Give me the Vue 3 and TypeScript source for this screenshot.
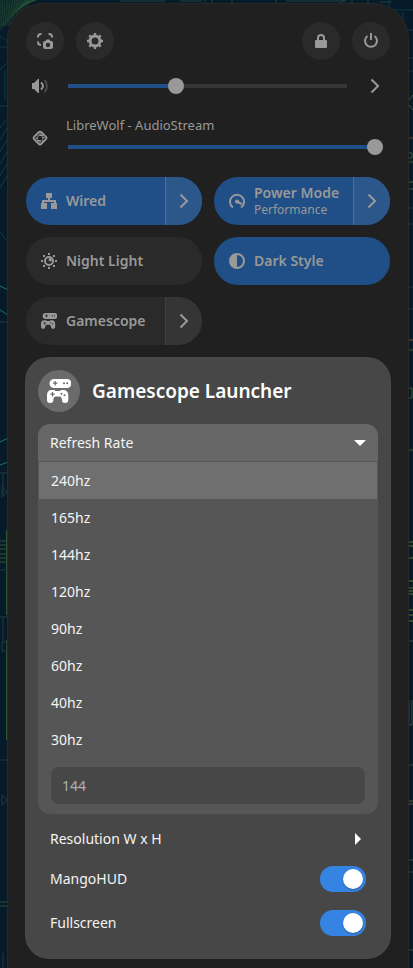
<script setup lang="ts">
import { ref } from 'vue'

interface Tile {
  id: string
  title: string
  subtitle?: string
  icon: string
  active: boolean
  menu: boolean
}

const volume = ref(38)
const streamVolume = ref(100)
const refreshOpen = ref(true)
const selected = ref('240hz')
const mangoHud = ref(true)
const fullscreen = ref(true)

const rates: string[] = ['240hz', '165hz', '144hz', '120hz', '90hz', '60hz', '40hz', '30hz']

const tiles = ref<Tile[]>([
  { id: 'wired', title: 'Wired', icon: 'i-wired', active: true, menu: true },
  { id: 'power-mode', title: 'Power Mode', subtitle: 'Performance', icon: 'i-gauge', active: true, menu: true },
  { id: 'night', title: 'Night Light', icon: 'i-night', active: false, menu: false },
  { id: 'dark', title: 'Dark Style', icon: 'i-dark', active: true, menu: false },
  { id: 'gamescope', title: 'Gamescope', icon: 'i-pads', active: false, menu: true },
])

const leftHatch: number[] = Array.from({ length: 13 }, (_, i) => i * 5)
</script>

<template>
  <div class="desktop">
    <svg class="wallpaper" aria-hidden="true">
      <g fill="none" stroke-width="1">
        <path v-for="n in leftHatch" :key="n" :d="`M0 ${n / 2} L${60 - n / 2} -4 M${n / 2} 0 L${n / 3} 26`" stroke="#2c5a36" opacity=".45" />
        <path d="M0 36 L8 42 M0 47h8 M0 70 L8 62 M5 70v30 M0 106h8" stroke="#14383f" />
        <path d="M0 128 L8 118 M0 140 L8 126 M0 152 L8 138 M0 164 L8 150 M0 176 L8 162 M0 188 L8 174 M0 232 L8 242" stroke="#1a3d3a" />
        <path d="M0 286 L8 290 M0 310 L8 315 M0 442 L8 438 M0 465 L8 462" stroke="#1c7368" />
        <path d="M6.500 530v85 M0 541h8 M0 545h8 M0 549h8 M0 554h8 M0 558h8 M0 562h8 M6.500 640v100" stroke="#2c5530" />
        <path d="M2 487v10l5-5z M2 642v9h5v-9z M2 795v10l5-5z M0 473h8 M3 473v22 M0 322h8 M0 570h8 M0 617h8 M3 617v25 M0 760h8 M3 953v15" stroke="#223a3d" />
        <path d="M0 902h8 M0 906h8" stroke="#24543a" />
        <path d="M120 1h45 M180 1h22 M205 0v4 M212 0v4 M232 0v4 M276 0v4 M286 1h60 M340 3l6-4 M352 0v4 M368 0v4 M380 2h12" stroke="#1f4538" />
      </g>
      <svg x="100%" width="1" height="100%" overflow="visible">
        <g fill="none" stroke-width="1">
          <path d="M-24 0v9 M-24 10h24 M-10 12v30 M-5 30h6 M-5 58h6 M-5 71h6 M-5 182h6 M-5 208h6 M-5 224h6 M-5 287h6 M-5 309h6 M-5 340h6" stroke="#133a40" />
          <path d="M-4 100l4-5 M-4 105l4 5 M-4 153h3v5h-3 M-4 162h5 M-4 182h5 M-4 189h5 M-4 350h5 M-4 388h3v10h-3 M-4 450h5" stroke="#2b6038" />
          <path d="M-5 138h6 M-5 340h6" stroke="#604632" />
          <path d="M-4 542h5 M-4 546h5 M-4 558h5 M-4 581h5 M-4 588h5 M-4 591h5 M-4 594h5 M-4 610h5 M-4 615h5 M-4 621h5" stroke="#48792e" />
          <path d="M-4 641h5 M-4 700v25h3v-25 M-4 765h5 M-4 860h5 M-4 872h5 M-4 950h5" stroke="#245044" />
          <path d="M-4 801h5 M-4 804h5" stroke="#555b37" />
        </g>
      </svg>
    </svg>

    <svg class="sprite" aria-hidden="true">
      <symbol id="i-shot" viewBox="0 0 16 16">
        <path d="M1 4.500V4a3 3 0 0 1 3-3h.5M11.500 1H12a3 3 0 0 1 3 3v.5M1 8.500V9a3 3 0 0 0 3 3" fill="none" stroke="currentColor" stroke-width="2" />
        <path fill-rule="evenodd" fill="currentColor" d="M9.500 6.500h3l1 1.500H14a2 2 0 0 1 2 2v4a2 2 0 0 1-2 2H8a2 2 0 0 1-2-2v-4a2 2 0 0 1 2-2h.5zM11 9.800a2.200 2.200 0 1 0 0 4.400 2.200 2.200 0 0 0 0-4.400z" />
      </symbol>
      <symbol id="i-gear" viewBox="0 0 16 16">
        <circle cx="8" cy="8" r="5" fill="none" stroke="currentColor" stroke-width="3" />
        <path d="M8 0v3M8 13v3M0 8h3M13 8h3M2.300 2.300l2 2M11.700 11.700l2 2M2.300 13.700l2-2M11.700 4.300l2-2" stroke="currentColor" stroke-width="2.400" />
      </symbol>
      <symbol id="i-lock" viewBox="0 0 16 16">
        <path d="M5 8V5a3 3 0 0 1 6 0v3" fill="none" stroke="currentColor" stroke-width="2" />
        <rect x="2" y="7" width="12" height="8" rx="1" fill="currentColor" />
      </symbol>
      <symbol id="i-power" viewBox="0 0 16 16">
        <path d="M4.500 3a6 6 0 1 0 7 0M8 0v7" fill="none" stroke="currentColor" stroke-width="2" />
      </symbol>
      <symbol id="i-volume" viewBox="0 0 16 16">
        <path d="M0 5h2l4-4h1v14H6l-4-4H0z" fill="currentColor" />
        <path d="M9 4.500c2.600 2 2.600 5 0 7" fill="none" stroke="currentColor" stroke-width="2" />
        <path d="M12.500 2c3.300 3.500 3.300 8.500 0 12" fill="none" stroke="currentColor" stroke-width="2" opacity=".35" />
      </symbol>
      <symbol id="i-stream" viewBox="0 0 16 16">
        <rect x="3" y="3" width="10" height="10" rx="1.500" transform="rotate(45 8 8)" fill="none" stroke="currentColor" stroke-width="1.800" />
        <path d="M8 3.500v2.500M12.500 7.500L10 8M8 12.500v-2.500M3.500 8.500L6 8M9 5l2 1M7 11l-2-1M10 10l1 1M5.500 5.500l1 1" fill="none" stroke="currentColor" stroke-width="1.600" />
      </symbol>
      <symbol id="i-wired" viewBox="0 0 16 16">
        <path d="M5 0h6v5H9v2h6v3h1v6h-6v-6h3V9H3v1h3v6H0v-6h1V7h6V5H5z" fill="currentColor" />
      </symbol>
      <symbol id="i-gauge" viewBox="0 0 16 16">
        <path d="M4 14.500A7 7 0 1 1 12 14.500" fill="none" stroke="currentColor" stroke-width="2" />
        <circle cx="8" cy="8.500" r="2" fill="currentColor" />
        <path d="M8 7l5.500 3.200-1 1.800L8 10z" fill="currentColor" />
      </symbol>
      <symbol id="i-night" viewBox="0 0 16 16">
        <circle cx="8" cy="8" r="4" fill="none" stroke="currentColor" stroke-width="2" />
        <circle cx="9.200" cy="6.800" r="1.700" fill="currentColor" />
        <path d="M7 0h2v2H7zM7 14h2v2H7zM0 7h2v2H0zM14 7h2v2h-2zM2 2h2v2H2zM12 2h2v2h-2zM2 12h2v2H2zM12 12h2v2h-2z" fill="currentColor" />
      </symbol>
      <symbol id="i-dark" viewBox="0 0 16 16">
        <circle cx="8" cy="8" r="7" fill="none" stroke="currentColor" stroke-width="2" />
        <path d="M8 1a7 7 0 0 0 0 14z" fill="currentColor" />
      </symbol>
      <symbol id="i-pads" viewBox="0 0 24 24">
        <path fill-rule="evenodd" fill="currentColor" d="M7 0h13a4 4 0 0 1 0 9H7a4 4 0 0 1 0-9zM8.800 2H7.600v1.600H6v1.200h1.600v1.600h1.200V4.800h1.600V3.600H8.800zM17 3.200a1 1 0 1 0 0 2 1 1 0 0 0 0-2zM20.200 3.200a1 1 0 1 0 0 2 1 1 0 0 0 0-2z" />
        <path fill-rule="evenodd" fill="currentColor" d="M4.500 11h3l1 1h4.500l1-1h2.500c3 0 4.800 2 4.800 5v4.800a3.200 3.200 0 0 1-6.400 0c0-2.300-1-3.300-2.400-3.300h-3.700c-1.400 0-2.400 1-2.400 3.300a3.200 3.200 0 0 1-6.400 0V16c0-3 1.500-5 4.500-5zM6.100 13H4.900v1.600H3.300v1.200h1.600v1.600h1.200v-1.600h1.600v-1.200H6.100zM14.500 13.700a1 1 0 1 0 0 2 1 1 0 0 0 0-2zM17.500 15.200a1 1 0 1 0 0 2 1 1 0 0 0 0-2z" />
      </symbol>
      <symbol id="i-chevron" viewBox="0 0 16 16">
        <path d="M4.500 1.500L11 8l-6.500 6.500" fill="none" stroke="currentColor" stroke-width="2" />
      </symbol>
    </svg>

    <main class="panel">
      <header class="system-row">
        <button class="round" type="button" aria-label="Take Screenshot"><svg class="icon"><use href="#i-shot" /></svg></button>
        <button class="round" type="button" aria-label="Settings"><svg class="icon"><use href="#i-gear" /></svg></button>
        <span class="spacer"></span>
        <button class="round" type="button" aria-label="Lock Screen"><svg class="icon"><use href="#i-lock" /></svg></button>
        <button class="round" type="button" aria-label="Power Off"><svg class="icon"><use href="#i-power" /></svg></button>
      </header>

      <section class="volume-row">
        <svg class="icon"><use href="#i-volume" /></svg>
        <input v-model.number="volume" class="slider" type="range" min="0" max="100" aria-label="Volume" :style="{ '--fill': volume + '%' }" />
        <button class="plain" type="button" aria-label="Sound Output"><svg class="icon"><use href="#i-chevron" /></svg></button>
      </section>

      <section class="stream-row">
        <svg class="icon"><use href="#i-stream" /></svg>
        <div class="stream">
          <label for="stream-volume">LibreWolf - AudioStream</label>
          <input id="stream-volume" v-model.number="streamVolume" class="slider" type="range" min="0" max="100" :style="{ '--fill': streamVolume + '%' }" />
        </div>
      </section>

      <section class="tiles">
        <div v-for="tile in tiles" :key="tile.id" class="tile" :class="{ active: tile.active }">
          <button class="tile-main" type="button" :aria-pressed="tile.active" @click="tile.active = !tile.active">
            <svg class="icon"><use :href="'#' + tile.icon" /></svg>
            <span class="tile-text">
              <span class="tile-title">{{ tile.title }}</span>
              <span v-if="tile.subtitle" class="tile-subtitle">{{ tile.subtitle }}</span>
            </span>
          </button>
          <button v-if="tile.menu" class="tile-arrow" type="button" :aria-label="tile.title + ' menu'">
            <svg class="icon"><use href="#i-chevron" /></svg>
          </button>
        </div>
      </section>

      <section class="card">
        <div class="card-head">
          <span class="badge"><svg class="icon large"><use href="#i-pads" /></svg></span>
          <h1>Gamescope Launcher</h1>
        </div>

        <div class="submenu">
          <button class="submenu-head" type="button" :aria-expanded="refreshOpen" @click="refreshOpen = !refreshOpen">
            <span>Refresh Rate</span>
            <svg class="caret down" viewBox="0 0 12 6" aria-hidden="true"><path d="M0 0h12L6 6z" fill="currentColor" /></svg>
          </button>
          <template v-if="refreshOpen">
            <ul class="rates">
              <li v-for="rate in rates" :key="rate">
                <button class="rate" type="button" :class="{ selected: rate === selected }" @click="selected = rate">{{ rate }}</button>
              </li>
            </ul>
            <div class="entry-wrap">
              <input class="entry" type="text" placeholder="144" aria-label="Custom refresh rate" />
            </div>
          </template>
        </div>

        <button class="row resolution" type="button">
          <span>Resolution W x H</span>
          <svg class="caret side" viewBox="0 0 6 12" aria-hidden="true"><path d="M0 0l6 6-6 6z" fill="currentColor" /></svg>
        </button>
        <label class="row">
          <span>MangoHUD</span>
          <input v-model="mangoHud" class="switch" type="checkbox" role="switch" />
        </label>
        <label class="row">
          <span>Fullscreen</span>
          <input v-model="fullscreen" class="switch" type="checkbox" role="switch" />
        </label>
      </section>
    </main>
  </div>
</template>

<style>
body {
  background: #071a2a;
}
</style>

<style scoped>
.desktop {
  position: relative;
  box-sizing: border-box;
  min-height: 100vh;
  padding: 3px 4px 0 7px;
  overflow: hidden;
  background: #071a2a;
  color: #999;
  font-family: "Noto Sans", "Open Sans", sans-serif;
  font-size: 14px;
  line-height: 20px;
}
.wallpaper {
  position: absolute;
  top: 0;
  left: 0;
  width: 100%;
  height: 100%;
}
.sprite {
  position: absolute;
  width: 0;
  height: 0;
}
.panel {
  position: relative;
  box-sizing: border-box;
  min-height: calc(100vh - 3px);
  padding: 18px 18px 9px;
  border: 1px solid #292929;
  border-bottom: 0;
  border-radius: 36px 36px 0 0;
  background: #202020;
}
button {
  margin: 0;
  padding: 0;
  border: 0;
  background: none;
  color: inherit;
  font: inherit;
  text-align: left;
}
.icon {
  display: block;
  flex: none;
  width: 16px;
  height: 16px;
}
.system-row {
  display: flex;
  gap: 12px;
}
.spacer {
  flex: 1;
  margin: 0 -12px;
}
.round {
  display: grid;
  place-items: center;
  width: 38px;
  height: 38px;
  border-radius: 50%;
  background: #2a2a2a;
}
.volume-row {
  display: flex;
  align-items: center;
  gap: 20px;
  height: 16px;
  margin-top: 18px;
  padding: 0 7px 0 6px;
}
.stream-row {
  display: flex;
  align-items: flex-end;
  gap: 20px;
  margin-top: 21px;
  padding: 0 7px 0 6px;
}
.stream-row .icon {
  margin-bottom: 9px;
}
.stream {
  display: flex;
  flex: 1;
  flex-direction: column;
  gap: 4px;
  min-width: 0;
}
.stream label {
  margin-left: -2px;
  font-size: 13px;
}
.slider {
  flex: 1 1 auto;
  width: 100%;
  min-width: 0;
  height: 16px;
  margin: 0;
  appearance: none;
  border-radius: 2px;
  background: linear-gradient(to right, #1f4f86 var(--fill), #363636 var(--fill)) center / 100% 4px no-repeat;
}
.stream .slider {
  flex: none;
}
.slider::-webkit-slider-thumb {
  width: 16px;
  height: 16px;
  appearance: none;
  border-radius: 50%;
  background: #999;
}
.tiles {
  display: grid;
  grid-template-columns: 1fr 1fr;
  gap: 12px;
  margin-top: 22px;
}
.tile {
  display: flex;
  height: 48px;
  overflow: hidden;
  border-radius: 24px;
  background: #2a2a2a;
}
.tile-main {
  display: flex;
  flex: 1;
  align-items: center;
  gap: 9px;
  min-width: 0;
  padding-left: 15px;
  white-space: nowrap;
}
.tile-text {
  display: flex;
  flex-direction: column;
}
.tile-title {
  font-weight: 600;
  line-height: 18px;
}
.tile-subtitle {
  font-size: 12px;
  line-height: 16px;
}
.tile-arrow {
  display: grid;
  flex: none;
  place-items: center;
  width: 37px;
  border-left: 1px solid #404040;
  background: #353535;
}
.active {
  background: #1f4f86;
}
.active .tile-arrow {
  border-color: #4c719c;
  background: #2c578a;
}
.card {
  margin: 12px -1px 0;
  padding: 13px 13px 14px;
  border-radius: 24px;
  background: #474747;
  color: #f4f4f4;
}
.card-head {
  display: flex;
  align-items: center;
  gap: 12px;
}
.badge {
  display: grid;
  place-items: center;
  width: 42px;
  height: 42px;
  border-radius: 50%;
  background: #6b6b6b;
  color: #fff;
}
.large {
  width: 24px;
  height: 24px;
}
h1 {
  margin: 0;
  color: #fff;
  font-size: 19px;
  font-weight: 600;
  line-height: 24px;
}
.submenu {
  margin-top: 12px;
  padding-bottom: 10px;
  overflow: hidden;
  border-radius: 12px;
  background: #565656;
}
.submenu-head {
  display: flex;
  align-items: center;
  justify-content: space-between;
  box-sizing: border-box;
  width: 100%;
  height: 37px;
  padding: 0 12px;
  background: #676767;
}
.caret {
  display: block;
  color: #fff;
}
.down {
  width: 12px;
  height: 6px;
}
.side {
  width: 6px;
  height: 12px;
  margin-right: 5px;
}
.rates {
  margin: 0;
  padding: 1px;
  list-style: none;
}
.rate {
  display: block;
  box-sizing: border-box;
  width: 100%;
  height: 37px;
  padding: 0 12px;
}
.selected {
  background: #6f6f6f;
}
.entry-wrap {
  padding: 8px 13px 0;
}
.entry {
  display: block;
  box-sizing: border-box;
  width: 100%;
  height: 37px;
  padding: 0 11px;
  border: 0;
  border-radius: 8px;
  background: #474747;
  color: #f4f4f4;
  font: inherit;
}
.entry::placeholder {
  color: #b0b0b0;
  opacity: 1;
}
.row {
  display: flex;
  align-items: center;
  justify-content: space-between;
  box-sizing: border-box;
  width: 100%;
  height: 44px;
  padding: 0 12px;
}
.resolution {
  height: 37px;
  margin-top: 6px;
}
.switch {
  display: flex;
  align-items: center;
  justify-content: flex-end;
  box-sizing: border-box;
  width: 46px;
  height: 26px;
  margin: 0;
  padding: 3px;
  appearance: none;
  border-radius: 13px;
  background: #6b6b6b;
}
.switch:checked {
  background: #3584e4;
}
.switch::before {
  width: 20px;
  height: 20px;
  border-radius: 50%;
  background: #fff;
  box-shadow: 0 1px 2px rgb(0 0 0 / 30%);
  content: "";
}
.switch:not(:checked) {
  justify-content: flex-start;
}
</style>
